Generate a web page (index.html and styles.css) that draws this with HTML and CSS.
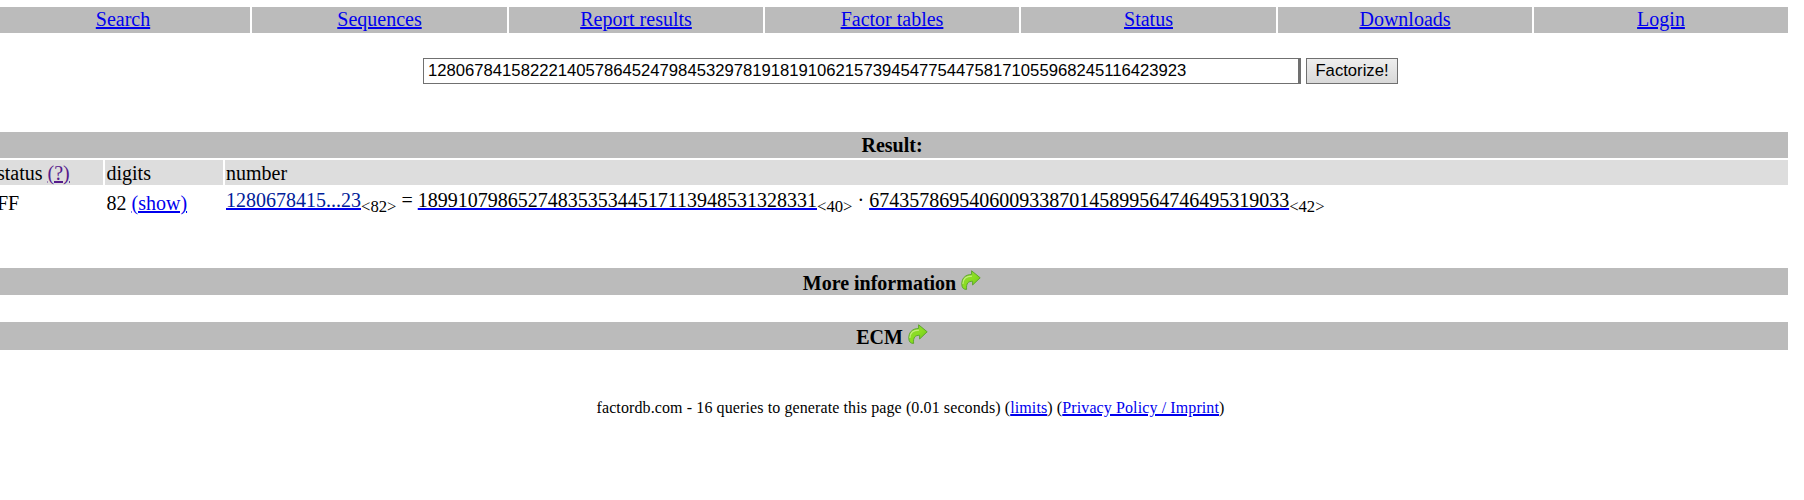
FILE: index.html
```html
<!DOCTYPE html>
<html lang="en">
<head>
<meta charset="utf-8">
<title>factordb.com</title>
<link rel="stylesheet" href="styles.css">
</head>
<body>
<svg class="defs" width="0" height="0" aria-hidden="true">
  <defs>
    <linearGradient id="leaf" x1="0" y1="0" x2="1" y2="1">
      <stop offset="0" stop-color="#8fd43a"/>
      <stop offset=".5" stop-color="#8ade20"/>
      <stop offset="1" stop-color="#66c01a"/>
    </linearGradient>
    <symbol id="arrow" viewBox="0 0 20 20">
      <path d="M10.6 .8 19.2 7.8 11.6 15V11.3C7.4 11.2 5 13 5.6 19.4 2.8 19.6 1 18 .8 14.6.6 8.6 4 4.6 10.6 4.5Z" fill="url(#leaf)" stroke="#5fa62e" stroke-width="1" stroke-linejoin="round"/>
      <path d="M1.9 14C2 9.4 5 6.2 11 6.2" fill="none" stroke="#c3ee7a" stroke-width="1.2"/>
    </symbol>
  </defs>
</svg>
<div class="page">
  <nav class="nav">
    <a href="#">Search</a><a href="#">Sequences</a><a href="#">Report results</a><a href="#">Factor tables</a><a href="#">Status</a><a href="#">Downloads</a><a href="#">Login</a>
  </nav>
  <form class="query">
    <input class="number" type="text" value="1280678415822214057864524798453297819181910621573945477544758171055968245116423923">
    <button class="go" type="button">Factorize!</button>
  </form>
  <h2 class="bar result">Result:</h2>
  <div class="row head">
    <div>status <a class="visited" href="#">(?)</a></div>
    <div>digits</div>
    <div>number</div>
  </div>
  <div class="row data">
    <div>FF</div>
    <div>82 <a href="#">(show)</a></div>
    <div class="factors"><a href="#"><span class="composite">1280678415...23</span></a><sub>&lt;82&gt;</sub> = <a href="#"><span class="prime">1899107986527483535344517113948531328331</span></a><sub>&lt;40&gt;</sub> · <a href="#"><span class="prime">674357869540600933870145899564746495319033</span></a><sub>&lt;42&gt;</sub></div>
  </div>
  <h2 class="bar more">More information <svg class="icon"><use href="#arrow"/></svg></h2>
  <h2 class="bar ecm">ECM <svg class="icon"><use href="#arrow"/></svg></h2>
  <footer class="foot">factordb.com - 16 queries to generate this page (0.01 seconds) (<a href="#">limits</a>) (<a href="#">Privacy Policy / Imprint</a>)</footer>
</div>
</body>
</html>
```
FILE: styles.css
```css
body {
  margin: 0;
  background: #fff;
  color: #000;
  font: 20px/24px "Liberation Serif", "Times New Roman", serif;
  overflow: hidden;
}
a { color: #0000ee; text-decoration-thickness: 2px; }
a.visited { color: #551a8b; }
.defs { display: block; }
.page {
  width: 1792px;
  margin-left: -4px;
  padding-top: 7px;
}
.nav {
  display: grid;
  grid-template-columns: 254px 255px 254px 254px 255px 254px 254px;
  gap: 2px;
  height: 26px;
}
.nav a { background: #bbb; text-align: center; line-height: 25px; }
.query {
  display: flex;
  gap: 5px;
  height: 26px;
  margin: 25px 0 48px 427px;
}
.number, .go {
  box-sizing: border-box;
  height: 26px;
  margin: 0;
  border: 1px solid #707070;
  border-radius: 0;
  color: #000;
  font: 16.6667px/22px "Liberation Sans", Arial, sans-serif;
}
.number { width: 878px; padding: 0 4px; border-right-width: 3px; background: #fff; }
.go { width: 92px; padding: 0; background: linear-gradient(#eee, #d8d8d8); }
.bar {
  margin: 0;
  background: #bbb;
  text-align: center;
  font-size: 20px;
  font-weight: bold;
}
.result { height: 26px; line-height: 26px; }
.row { display: grid; grid-template-columns: 107px 118px 1fr; gap: 2px; }
.row > div { padding-left: 1px; white-space: nowrap; }
.row > div:nth-child(2) { padding-left: 1.5px; }
.head { margin-top: 2px; }
.head > div { height: 25px; line-height: 26px; background: #ddd; }
.data { height: 30px; margin-top: 2px; }
.data > div { line-height: 32px; }
.data > .factors { line-height: 26px; }
sub { font-size: 16.6667px; line-height: 0; }
.composite { color: #002099; }
.prime { color: #000; }
.more { height: 27px; line-height: 30px; margin-top: 51px; }
.ecm { height: 28px; line-height: 30px; margin-top: 27px; }
.icon { width: 20px; height: 20px; vertical-align: 0; display: inline-block; }
.foot { margin-top: 46px; padding-left: 37px; text-align: center; font-size: 16px; letter-spacing: .105px; }
```
